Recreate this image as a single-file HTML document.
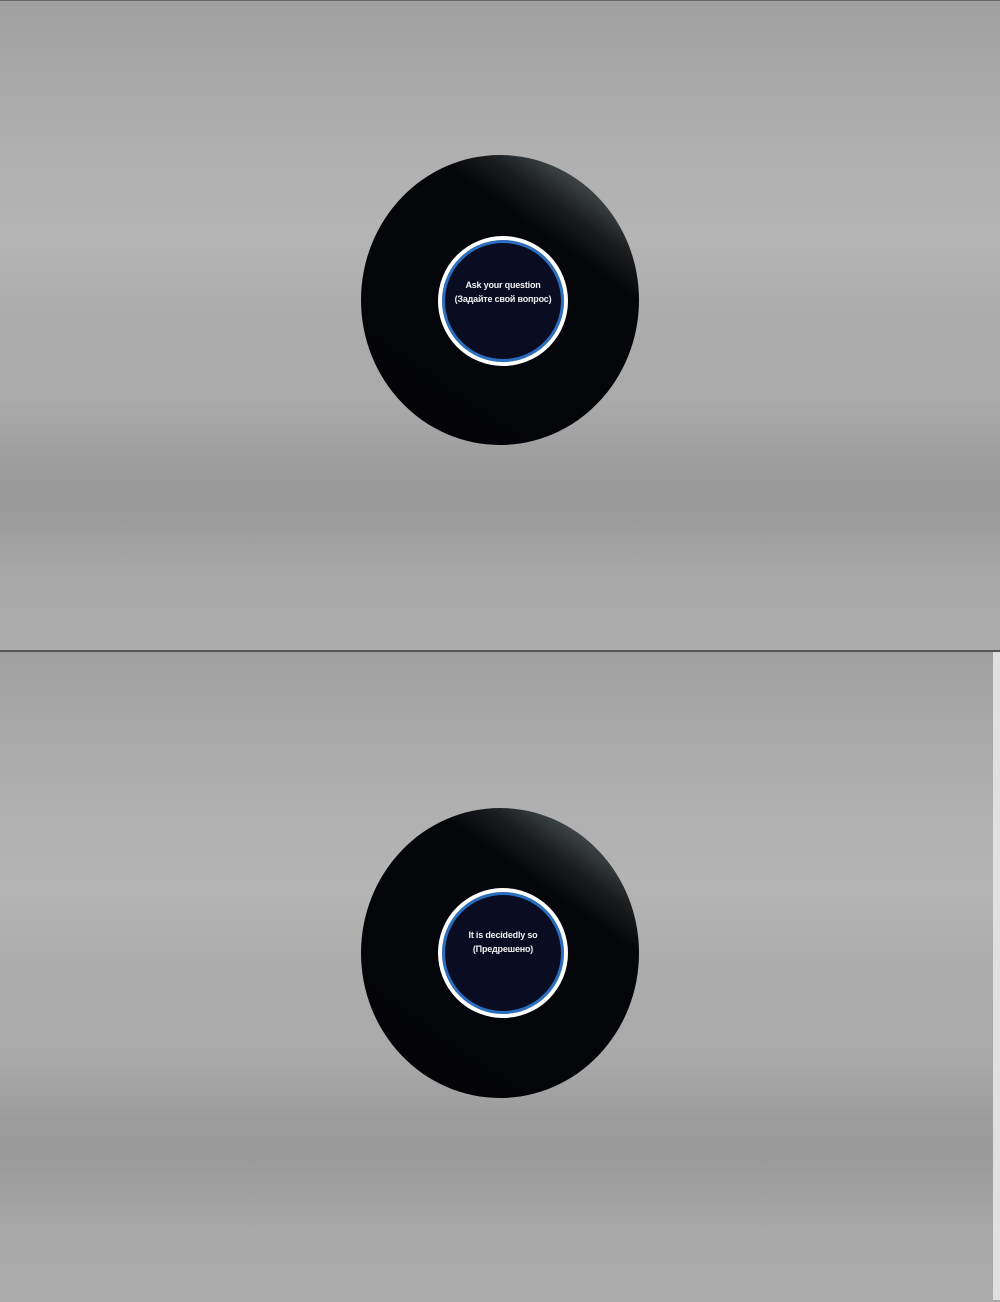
<!DOCTYPE html>
<html><head><meta charset="utf-8"><style>
html,body{margin:0;padding:0;width:1000px;height:1300px;overflow:hidden;background:#a8a8a8}
.panel{position:absolute;left:0;width:1000px;height:650px;
background:linear-gradient(180deg,#a0a0a0 0px,#a6a6a6 60px,#b0b0b0 150px,#b4b4b4 240px,#acacac 320px,#aaaaaa 400px,#9c9c9c 470px,#999 500px,#a8a8a8 580px,#acacac 650px)}
.p1{top:0;border-top:1px solid #666}
.p2{top:652px;width:993px}
.line{position:absolute;left:0;top:650px;width:1000px;height:2px;background:#555}
.strip{position:absolute;left:993px;top:652px;width:7px;height:648px;background:#e0e0e0}
.ball{position:absolute;left:361px;width:278px;height:290px;border-radius:50%;
background:linear-gradient(215deg,#7a8282 0%,#50585a 10%,#1a1c1e 22%,#05060a 30%,#030408 100%)}
.inner{position:absolute;left:438px;width:122px;height:122px;border-radius:50%;
border:4px solid #fff;background:#0a0c22;box-shadow:inset 0 0 0 3px #2a6ec0;
color:#f0f0f0;font-family:"Liberation Sans",sans-serif;font-weight:bold;font-size:9px;letter-spacing:-0.2px;text-align:center;box-sizing:content-box}
.inner div{position:absolute;left:0;right:0}
</style></head><body>
<div class="panel p1"></div>
<div class="line"></div>
<div class="panel p2"></div>
<div class="strip"></div>
<div class="ball" style="top:155px"></div>
<div class="inner" style="top:236px"><div style="top:40px">Ask your question</div><div style="top:54px">(Задайте свой вопрос)</div></div>
<div class="ball" style="top:808px"></div>
<div class="inner" style="top:888px"><div style="top:38px">It is decidedly so</div><div style="top:52px">(Предрешено)</div></div>
</body></html>
